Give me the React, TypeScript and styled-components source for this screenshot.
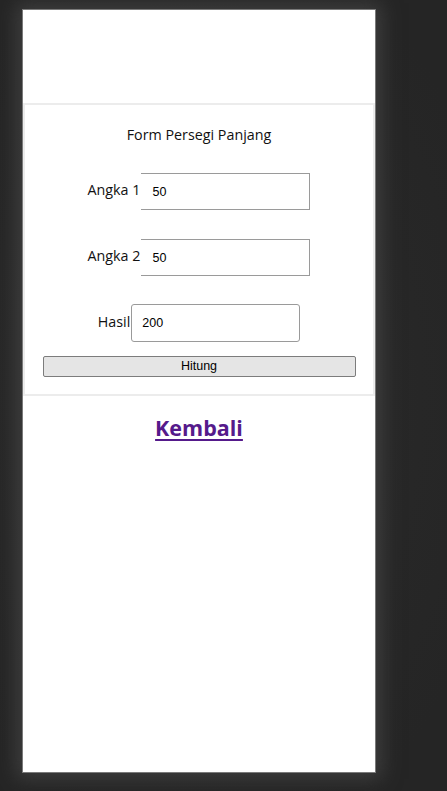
import React from "react";
import styled, { createGlobalStyle } from "styled-components";

const Global = createGlobalStyle`
  html, body { margin: 0; padding: 0; background: #262626; }
  body { width: 447px; height: 791px; overflow: hidden; }
`;

const Stage = styled.div`
  padding: 9px 0 0 22px;
  height: 791px;
  box-sizing: border-box;
  background: radial-gradient(ellipse 70% 60% at 45% 50%, #2e2e2e 0%, #272727 70%, #252525 100%);
`;

const Phone = styled.div`
  width: 354px;
  height: 764px;
  box-sizing: border-box;
  border: 1px solid #7a7a7a;
  background: #fff;
  box-shadow: 0 0 18px 6px rgba(70, 70, 70, 0.75);
  display: flex;
  flex-direction: column;
  padding-top: 93px;
  font-family: "Open Sans", "Noto Sans", sans-serif;
`;

const FormCard = styled.section`
  border: 2px solid #ececec;
  display: flex;
  flex-direction: column;
  align-items: center;
  padding: 20px 18px 17px;
`;

const Title = styled.div`
  font-size: 14.3px;
  line-height: 20px;
  color: #111;
  margin-bottom: 28px;
`;

const Row = styled.div<{ $gap: number }>`
  display: flex;
  align-items: center;
  justify-content: center;
  margin-bottom: ${(p) => p.$gap}px;
`;

const Label = styled.label`
  font-size: 14.3px;
  color: #111;
  line-height: 20px;
  margin-top: -3px;
`;

const Field = styled.input<{ $boxed?: boolean }>`
  box-sizing: border-box;
  width: 169px;
  height: ${(p) => (p.$boxed ? 38 : 37)}px;
  border: 1px solid #9a9a9a;
  border-left: ${(p) => (p.$boxed ? "1px solid #9a9a9a" : "none")};
  border-radius: ${(p) => (p.$boxed ? "3px" : "0")};
  padding: 0 0 0 ${(p) => (p.$boxed ? 10 : 11)}px;
  margin-left: ${(p) => (p.$boxed ? 1 : 1)}px;
  font-family: "Liberation Sans", Arial, sans-serif;
  font-size: 12.5px;
  color: #000;
  background: #fff;
  outline: none;
`;

const Button = styled.button`
  width: 313px;
  height: 21px;
  box-sizing: border-box;
  border: 1px solid #7c7c7c;
  border-radius: 2px;
  background: #e5e5e5;
  font-family: "Liberation Sans", Arial, sans-serif;
  font-size: 12.5px;
  color: #000;
  padding: 0;
  line-height: 19px;
`;

const Back = styled.a`
  align-self: center;
  margin-top: 16px;
  font-size: 21.5px;
  font-weight: 700;
  line-height: 32px;
  color: #551a8b;
  text-decoration: underline;
  text-decoration-thickness: 2px;
  text-underline-offset: 3px;
`;

export default function App() {
  return (
    <>
      <Global />
      <Stage>
        <Phone>
          <FormCard>
            <Title>Form Persegi Panjang</Title>
            <Row $gap={29}>
              <Label>Angka 1</Label>
              <Field defaultValue="50" />
            </Row>
            <Row $gap={28}>
              <Label>Angka 2</Label>
              <Field defaultValue="50" />
            </Row>
            <Row $gap={14}>
              <Label>Hasil</Label>
              <Field $boxed defaultValue="200" />
            </Row>
            <Button>Hitung</Button>
          </FormCard>
          <Back href="#">Kembali</Back>
        </Phone>
      </Stage>
    </>
  );
}
